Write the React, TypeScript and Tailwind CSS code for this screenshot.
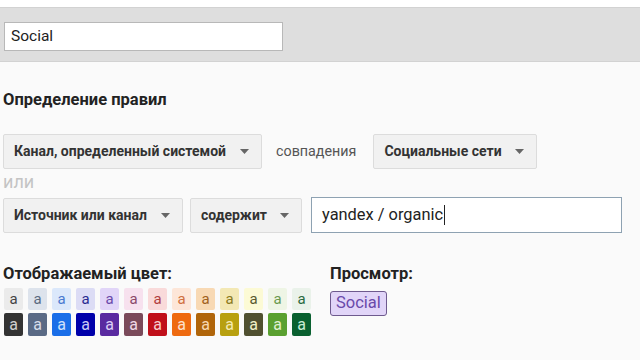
import React from 'react';

const swatches: { light: [string, string]; dark: [string, string] }[] = [
  { light: ['bg-[#ebebeb]', 'text-[#444444]'], dark: ['bg-[#333333]', 'text-[#cfcfcf]'] },
  { light: ['bg-[#dde3ec]', 'text-[#5a6a80]'], dark: ['bg-[#5a6a85]', 'text-[#d6dcea]'] },
  { light: ['bg-[#dbe8fb]', 'text-[#4a7ad0]'], dark: ['bg-[#1a6ee8]', 'text-[#cfe0fb]'] },
  { light: ['bg-[#dcdcf5]', 'text-[#2a2a90]'], dark: ['bg-[#0000aa]', 'text-[#c8c8f5]'] },
  { light: ['bg-[#e1d5f8]', 'text-[#6a4aaa]'], dark: ['bg-[#5a2aa0]', 'text-[#dccdf5]'] },
  { light: ['bg-[#f7e1ee]', 'text-[#8a4a6a]'], dark: ['bg-[#7a4a5a]', 'text-[#f0d8e6]'] },
  { light: ['bg-[#f9dada]', 'text-[#b04040]'], dark: ['bg-[#c0101a]', 'text-[#f8cccc]'] },
  { light: ['bg-[#fde6d8]', 'text-[#d07040]'], dark: ['bg-[#ee6a10]', 'text-[#fde0cc]'] },
  { light: ['bg-[#f8d9b4]', 'text-[#a06020]'], dark: ['bg-[#b0650a]', 'text-[#f8d8b0]'] },
  { light: ['bg-[#f3e8b4]', 'text-[#8a7a20]'], dark: ['bg-[#b8a010]', 'text-[#f5eab0]'] },
  { light: ['bg-[#fcfad5]', 'text-[#5a5a30]'], dark: ['bg-[#505030]', 'text-[#f0f0c8]'] },
  { light: ['bg-[#eef5e5]', 'text-[#6a9a50]'], dark: ['bg-[#5aa030]', 'text-[#e0f0d0]'] },
  { light: ['bg-[#eaf2ea]', 'text-[#2a6a40]'], dark: ['bg-[#0a6030]', 'text-[#c8ecd4]'] },
];

function Caret() {
  return (
    <svg width="9" height="5" viewBox="0 0 9 5" className="shrink-0">
      <path d="M0 0h9L4.5 5z" fill="#666" />
    </svg>
  );
}

function Select({ label, className }: { label: string; className: string }) {
  return (
    <div
      className={`flex h-[35px] items-center justify-between rounded-[2px] border border-[#dcdcdc] bg-[#f1f1f1] pl-[10px] pr-[12px] text-[14px] font-bold text-[#333] ${className}`}
    >
      <span>{label}</span>
      <Caret />
    </div>
  );
}

export default function App() {
  return (
    <div className="h-[360px] w-[640px] overflow-hidden bg-[#fafafa] font-['Roboto',sans-serif] text-[#222]">
      <div className="h-[7px] bg-white" />
      <div className="flex h-[55px] items-start border-y border-[#d2d2d2] bg-[#dedede] pl-[4px] pt-[14px]">
        <div className="flex h-[29px] w-[279px] items-center border border-[#b8b8b8] bg-white pl-[6px] text-[15.5px] text-[#222]">
          Social
        </div>
      </div>

      <div className="pl-[3px]">
        <div className="mt-[28px] text-[16.5px] font-bold leading-[20px] text-[#222]">Определение правил</div>

        <div className="mt-[24px] flex items-center">
          <Select label="Канал, определенный системой" className="w-[259px]" />
          <span className="ml-[14px] text-[14.3px] text-[#555]">совпадения</span>
          <Select label="Социальные сети" className="ml-[17px] w-[164px]" />
        </div>

        <div className="h-[28px] text-[18px] leading-[26px] text-[#c4c4c4]">или</div>

        <div className="flex items-center">
          <Select label="Источник или канал" className="w-[180px]" />
          <Select label="содержит" className="ml-[7px] w-[112px]" />
          <div className="ml-[9px] flex h-[36px] w-[311px] items-center border border-[#8ea2b2] bg-white pl-[10px] text-[16.4px] text-[#222]">
            yandex / organic<span className="ml-[1px] inline-block h-[20px] w-px bg-[#222]" />
          </div>
        </div>

        <div className="mt-[31px] flex">
          <div className="w-[327px]">
            <div className="text-[16.5px] font-bold leading-[20px] text-[#222]">Отображаемый цвет:</div>
            <div className="mt-[4px] flex flex-col gap-[3px] pl-[1px]">
              <div className="flex gap-[5px]">
                {swatches.map((s, i) => (
                  <div
                    key={i}
                    className={`flex h-[22px] w-[19px] items-center justify-center rounded-[2px] text-[15px] leading-none ${s.light[0]} ${s.light[1]}`}
                  >
                    a
                  </div>
                ))}
              </div>
              <div className="flex gap-[5px]">
                {swatches.map((s, i) => (
                  <div
                    key={i}
                    className={`flex h-[23px] w-[19px] items-center justify-center rounded-[2px] text-[16px] leading-none ${s.dark[0]} ${s.dark[1]}`}
                  >
                    a
                  </div>
                ))}
              </div>
            </div>
          </div>
          <div>
            <div className="text-[16.5px] font-bold leading-[20px] text-[#222]">Просмотр:</div>
            <div className="mt-[7px] inline-flex h-[25px] items-center rounded-[3px] border border-[#6e5a8e] bg-[#e1d5f8] px-[5px] text-[16.5px] text-[#6a4aaa]">
              Social
            </div>
          </div>
        </div>
      </div>
    </div>
  );
}
